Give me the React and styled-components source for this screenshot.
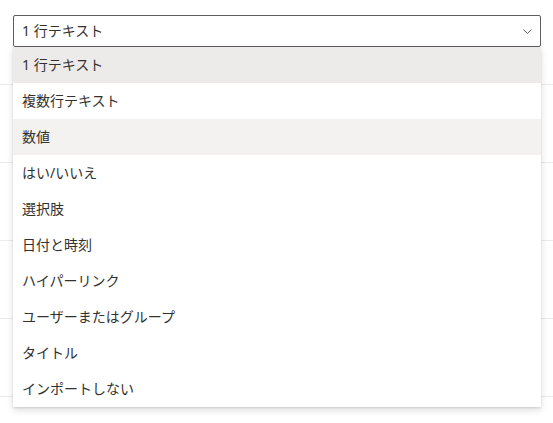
import React from 'react';
import styled, { createGlobalStyle, css } from 'styled-components';

const GlobalStyle = createGlobalStyle`
  html, body {
    margin: 0;
    padding: 0;
    background: #ffffff;
  }
  body {
    font-family: "Segoe UI", "Noto Sans", "Noto Sans CJK JP", sans-serif;
    -webkit-font-smoothing: antialiased;
  }
`;

const options = [
  '1 行テキスト',
  '複数行テキスト',
  '数値',
  'はい/いいえ',
  '選択肢',
  '日付と時刻',
  'ハイパーリンク',
  'ユーザーまたはグループ',
  'タイトル',
  'インポートしない',
];

const Page = styled.div`
  position: relative;
  width: 553px;
  height: 423px;
  overflow: hidden;
`;

const Header = styled.div`
  height: 85px;
  padding: 15px 12px 0 13px;
  box-sizing: border-box;
  border-bottom: 1px solid #edebe9;
`;

const Row = styled.div`
  height: 77px;
  border-bottom: 1px solid #edebe9;
`;

const Field = styled.div`
  position: relative;
  width: 528px;
`;

const Combo = styled.div`
  display: flex;
  align-items: center;
  justify-content: space-between;
  height: 32px;
  box-sizing: border-box;
  border: 1px solid #605e5c;
  border-radius: 2px;
  padding: 0 3px 2px 8px;
  font-size: 14px;
  color: #323130;
  background: #ffffff;
`;

const Caret = styled.span`
  display: flex;
  align-items: center;
  justify-content: center;
  width: 20px;
  height: 20px;
  margin-top: 2px;
`;

const Callout = styled.div`
  position: absolute;
  top: 32px;
  left: 0;
  width: 528px;
  background: #ffffff;
  box-shadow: 0 3.2px 7.2px rgba(0, 0, 0, 0.132), 0 0.6px 1.8px rgba(0, 0, 0, 0.108);
  z-index: 2;
`;

const Item = styled.div`
  display: flex;
  align-items: center;
  height: 36px;
  box-sizing: border-box;
  padding: 0 9px 3px;
  font-size: 14px;
  color: #323130;
  background: #ffffff;
  ${(p) => p.$selected && css`background: #edebe9;`}
  ${(p) => p.$hover && css`background: #f3f2f1;`}
`;

const ChevronDown = () => (
  <svg width="9" height="5" viewBox="0 0 9 5" fill="none">
    <path d="M0.4 0.5 L4.5 4.4 L8.6 0.5" stroke="#605e5c" strokeWidth="1" />
  </svg>
);

export default function App() {
  return (
    <Page>
      <GlobalStyle />
      <Header>
        <Field>
          <Combo>
            <span>{options[0]}</span>
            <Caret>
              <ChevronDown />
            </Caret>
          </Combo>
          <Callout role="listbox">
            {options.map((label, i) => (
              <Item key={label} $selected={i === 0} $hover={i === 2}>
                {label}
              </Item>
            ))}
          </Callout>
        </Field>
      </Header>
      <Row />
      <Row />
      <Row />
      <Row />
    </Page>
  );
}
